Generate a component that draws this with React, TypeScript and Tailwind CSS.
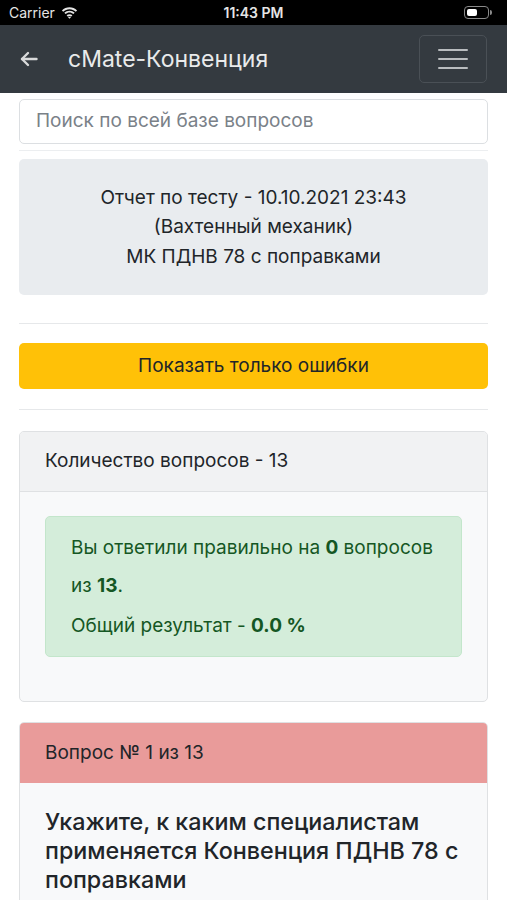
import React from 'react';

const font = { fontFamily: 'Inter, "Liberation Sans", Arial, sans-serif' };

// Статус-бар iOS
const StatusBar: React.FC = () => (
  <div className="h-[25px] bg-black flex items-center justify-between px-[9px] text-white">
    <div className="flex items-center gap-[6px] w-[120px]">
      <span className="text-[14px] leading-none text-[#e5e5e5]">Carrier</span>
      <svg width="17" height="12" viewBox="0 0 17 12" fill="#e5e5e5">
        <path d="M8.5 2.2c2.4 0 4.6.9 6.3 2.5l1.3-1.3C14 1.4 11.4.3 8.5.3S3 1.4.9 3.4l1.3 1.3c1.7-1.6 3.9-2.5 6.3-2.5z" />
        <path d="M8.5 5.6c1.5 0 2.8.6 3.9 1.5l1.3-1.3C12.3 4.5 10.5 3.7 8.5 3.7s-3.8.8-5.2 2.1l1.3 1.3c1.1-.9 2.4-1.5 3.9-1.5z" />
        <path d="M8.5 9.1c.6 0 1.1.2 1.5.6l1.4-1.4c-.8-.7-1.8-1.1-2.9-1.1s-2.1.4-2.9 1.1L7 9.7c.4-.4.9-.6 1.5-.6z" />
        <path d="M8.5 11.8 10 10.3c-.4-.4-.9-.6-1.5-.6s-1.1.2-1.5.6z" />
      </svg>
    </div>
    <span className="text-[14px] font-semibold leading-none text-[#e5e5e5]">11:43 PM</span>
    <div className="w-[120px] flex justify-end pr-[6px]">
      <div className="flex items-center">
        <div className="w-[25px] h-[13px] rounded-[4px] border border-[#8a8a8a] p-[2px] flex">
          <div className="w-[10px] h-full bg-white rounded-[2px]" />
        </div>
        <div className="w-[2px] h-[5px] bg-[#8a8a8a] rounded-r-sm ml-[1px]" />
      </div>
    </div>
  </div>
);

// Навигационная панель
const NavBar: React.FC = () => (
  <div className="h-[68px] bg-[#343a40] flex items-center pl-[20px] pr-[20px]">
    <svg width="18" height="16" viewBox="0 0 18 16" fill="none" stroke="#d8d9da" strokeWidth="2.4" strokeLinecap="round" strokeLinejoin="round">
      <path d="M16.5 8H2" />
      <path d="M8 2 2 8l6 6" />
    </svg>
    <span className="ml-[30px] text-[23px] text-[#e9eaeb] leading-none flex-1">cMate-Конвенция</span>
    <div className="w-[68px] h-[48px] rounded-[5px] border border-[#4a5056] flex flex-col items-center justify-center gap-[7px]">
      <div className="w-[30px] h-[2px] bg-[#b9bcbf] rounded" />
      <div className="w-[30px] h-[2px] bg-[#b9bcbf] rounded" />
      <div className="w-[30px] h-[2px] bg-[#b9bcbf] rounded" />
    </div>
  </div>
);

export default function App() {
  return (
    <div className="w-[507px] h-[900px] overflow-hidden bg-white text-[#212529]" style={font}>
      <StatusBar />
      <NavBar />
      <div className="px-[19px] pt-[6px]">
        <div className="h-[45px] border border-[#dcdfe2] rounded-[5px] flex items-center px-[16px] text-[19px] text-[#7a8188]">
          Поиск по всей базе вопросов
        </div>
        <div className="h-px bg-[#eceef0] mt-[6px]" />
        <div className="mt-[8px] h-[136px] bg-[#e9ecef] rounded-[5px] flex flex-col items-center justify-center text-[19px] leading-[29.5px] text-[#212529]">
          <div>Отчет по тесту - 10.10.2021 23:43</div>
          <div>(Вахтенный механик)</div>
          <div>МК ПДНВ 78 с поправками</div>
        </div>
        <div className="h-px bg-[#e6e8ea] mt-[28px]" />
        <div className="mt-[19px] h-[46px] bg-[#ffc107] rounded-[5px] flex items-center justify-center text-[19px] text-[#212529]">
          Показать только ошибки
        </div>
        <div className="h-px bg-[#e6e8ea] mt-[20px]" />

        <div className="mt-[21px] border border-[#dfe1e3] rounded-[5px] overflow-hidden bg-[#f8f9fa]">
          <div className="h-[60px] bg-[#f1f2f3] border-b border-[#dfe1e3] flex items-center px-[25px] text-[19px]">
            Количество вопросов - 13
          </div>
          <div className="px-[25px] pt-[24px] pb-[44px]">
            <div className="bg-[#d4edda] border border-[#c3e6cb] rounded-[5px] px-[25px] pt-[12px] pb-[11px] text-[19px] text-[#155724]">
              <p className="leading-[38px]">
                <span>Вы ответили правильно на </span>
                <b>0</b>
                <span> вопросов</span>
                <br />
                <span>из </span>
                <b>13</b>
                <span>.</span>
              </p>
              <p className="leading-[38px] mt-[2px]">
                Общий результат - <b>0.0 %</b>
              </p>
            </div>
          </div>
        </div>

        <div className="mt-[20px] border border-[#dfe1e3] rounded-[5px] overflow-hidden bg-[#f8f9fa]">
          <div className="h-[60px] bg-[#e99b9a] flex items-center px-[25px] text-[19px]">
            Вопрос № 1 из 13
          </div>
          <div className="px-[25px] pt-[24px] pb-[20px]">
            <div className="text-[23.3px] leading-[29px] font-medium text-[#212529]">
              Укажите, к каким специалистам применяется Конвенция ПДНВ 78 с поправками
            </div>
          </div>
        </div>
      </div>
    </div>
  );
}
